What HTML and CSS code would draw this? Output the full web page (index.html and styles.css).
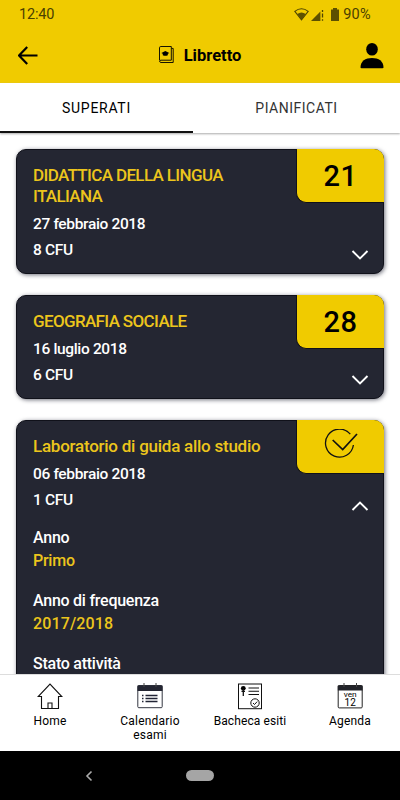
FILE: index.html
```html
<!DOCTYPE html>
<html lang="it">
<head>
<meta charset="utf-8">
<title>Libretto</title>
<link rel="stylesheet" href="styles.css">
</head>
<body>
<div class="app">
  <div class="status">
    <span class="clock">12:40</span>
    <svg class="wifi" width="15" height="13" viewBox="0 0 15 13"><path d="M.8 3.4Q7.5-1.8 14.2 3.4L7.5 11.8Z" fill="none" stroke="#4f4500" stroke-width="1.1"/><path d="M3.2 6Q7.5 3 11.8 6L7.5 11.8Z" fill="#5c5000"/></svg>
    <svg class="signal" width="13" height="12" viewBox="0 0 13 12"><path d="M0 12L9.4 2.6V12Z" fill="#5c5000"/><path d="M11.5 1v2M11.5 4.5v4M11.5 10.2v1.5" stroke="#4f4500" stroke-width="1.3"/></svg>
    <svg class="battery" width="8" height="13" viewBox="0 0 8 13"><path d="M0 1.5h2V0h4v1.5h2V13H0Z" fill="#5c5000"/></svg>
    <span class="percent">90%</span>
  </div>
  <header class="header">
    <svg class="back" width="20" height="19" viewBox="0 0 20 19"><path d="M9.2 1L1 9.5L9.2 18M1 9.5H19.5" fill="none" stroke="#000" stroke-width="2.2"/></svg>
    <div class="heading">
      <svg width="15" height="17" viewBox="0 0 15 17"><path d="M.5 14.2V1.8Q.5.5 1.8.5H12.3V14.2H2Q.5 14.2.5 15.2T2 16.5H14.2V2.4H12.4" fill="none" stroke="#171400"/><path d="M2.4 7L6.3 4.9L10.3 7L6.3 9.2Z"/><path d="M3.8 7.5V9.2Q6.3 10.3 8.8 9.2V7.5Z"/></svg>
      <h1>Libretto</h1>
    </div>
    <svg class="user" width="24" height="26" viewBox="0 0 24 26"><ellipse cx="12" cy="6.3" rx="5.8" ry="6.3"/><path d="M.5 24.5C.5 18 5.4 15 12 15S23.5 18 23.5 24.5Q23.5 25.3 22.5 25.3H1.5Q.5 25.3.5 24.5Z"/></svg>
  </header>
  <nav class="tabs">
    <div class="tab active">SUPERATI</div>
    <div class="tab">PIANIFICATI</div>
  </nav>
  <main class="list">
    <section class="card">
      <h2 class="caps">DIDATTICA DELLA LINGUA ITALIANA</h2>
      <p>27 febbraio 2018</p>
      <p>8 CFU</p>
      <div class="badge">21</div>
      <svg class="chevron" width="18" height="10" viewBox="0 0 18 10"><path d="M1.5 1L9 8.5L16.5 1"/></svg>
    </section>
    <section class="card">
      <h2 class="caps">GEOGRAFIA SOCIALE</h2>
      <p>16 luglio 2018</p>
      <p>6 CFU</p>
      <div class="badge">28</div>
      <svg class="chevron" width="18" height="10" viewBox="0 0 18 10"><path d="M1.5 1L9 8.5L16.5 1"/></svg>
    </section>
    <section class="card open">
      <h2>Laboratorio di guida allo studio</h2>
      <p>06 febbraio 2018</p>
      <p>1 CFU</p>
      <dl class="details">
        <dt>Anno</dt><dd>Primo</dd>
        <dt>Anno di frequenza</dt><dd class="year">2017/2018</dd>
        <dt>Stato attività</dt>
      </dl>
      <div class="badge"><svg width="34" height="30" viewBox="0 0 34 30"><path d="M26.3 5.2A14 14 0 1 0 29.4 16" fill="none" stroke="#111" stroke-width="1.3"/><path d="M8.7 11L18.7 20.5L33 5" fill="none" stroke="#111" stroke-width="1.7"/></svg></div>
      <svg class="chevron" width="18" height="10" viewBox="0 0 18 10"><path d="M1.5 9L9 1.5L16.5 9"/></svg>
    </section>
  </main>
  <nav class="bottom">
    <div class="item">
      <svg width="26" height="27" viewBox="0 0 26 27"><path d="M4.5 13.5H1.2L13 1L24.8 13.5H21.5V25.5H4.5ZM11 25.5V20H15V25.5" fill="none" stroke="#111" stroke-width="1.1"/></svg>
      <span>Home</span>
    </div>
    <div class="item">
      <svg width="26" height="27" viewBox="0 0 26 27"><rect x=".8" y="2.5" width="24.4" height="22.2" rx="1" fill="#fff" stroke="#333640"/><path d="M.5 2.5H25.5V8H.5Z" fill="#242632"/><path d="M7 0V4M19 0V4" stroke="#444"/><path d="M8.5 12.5H20.5M8.5 15.5H20.5M8.5 18.5H20.5" stroke="#222536" stroke-width="1.3"/><path d="M5 12.5H6.5M5 15.5H6.5M5 18.5H6.5" stroke="#222536" stroke-width="1.3"/></svg>
      <span>Calendario<br>esami</span>
    </div>
    <div class="item">
      <svg width="26" height="27" viewBox="0 0 26 27"><rect x="1.5" y="1" width="23" height="24.7" fill="none" stroke="#111"/><circle cx="6.3" cy="5.3" r="2.4"/><path d="M6.3 6V13M4.5 8.4H8" stroke="#111" stroke-width="1.3"/><path d="M11.5 5H22M11.5 8.2H22M11.5 11.5H22" stroke="#111" stroke-width="1.1"/><circle cx="18" cy="20" r="4.2" fill="none" stroke="#111"/><path d="M16 20L17.5 21.5L20.2 18.6" fill="none" stroke="#111"/></svg>
      <span class="tight">Bacheca esiti</span>
    </div>
    <div class="item">
      <svg width="26" height="27" viewBox="0 0 26 27"><rect x="1.2" y="2.5" width="24" height="22.4" rx="1" fill="#fff" stroke="#222"/><path d="M.8 2.5H25.6V7.5H.8Z" fill="#222329"/><path d="M7 0V4M19.5 0V4" stroke="#444"/><text class="day" x="13.2" y="13.8" textLength="13" lengthAdjust="spacingAndGlyphs">ven</text><text class="num" x="13.2" y="23.4">12</text></svg>
      <span>Agenda</span>
    </div>
  </nav>
  <div class="system">
    <svg width="8" height="12" viewBox="0 0 8 12"><path d="M6.5 1.5L2 6L6.5 10.5" fill="none" stroke="#aaa" stroke-width="1.6"/></svg>
    <div class="pill"></div>
    <div></div>
  </div>
</div>
</body>
</html>
```
FILE: styles.css
```css
* { box-sizing: border-box; margin: 0; padding: 0; }
body { background: #fff; font-family: Roboto, "Liberation Sans", sans-serif; color: #111; }
svg { display: block; flex: none; }
.app { width: 400px; height: 800px; display: flex; flex-direction: column; overflow: hidden; }
.status { height: 28px; flex: none; background: #f0cb00; display: flex; align-items: center; padding: 1px 29px 0 19px; color: #4a4000; font-size: 14.5px; }
.clock { margin-right: auto; letter-spacing: -.2px; }
.signal { margin-left: 2px; }
.battery { margin: 0 4px 0 7px; }
.percent { letter-spacing: .3px; }
.header { height: 55px; flex: none; background: #f0cb00; display: flex; align-items: center; justify-content: space-between; padding: 0 16px 0 18px; }
.heading { display: flex; align-items: center; gap: 10px; padding-left: 2px; }
.heading svg { margin-top: -3px; }
h1 { font-size: 16.5px; font-weight: 700; line-height: 20px; color: #000; padding-top: 1px; }
.tabs { height: 50px; flex: none; display: flex; background: #fff; box-shadow: 0 1px 2px #aaa; }
.tab { width: 193px; display: flex; align-items: center; justify-content: center; font-size: 14px; letter-spacing: .5px; color: #333; }
.tab + .tab { width: 207px; }
.active { color: #000; border-bottom: 2px solid #111; padding-top: 2px; letter-spacing: .7px; }
.list { flex: 1; min-height: 0; overflow: hidden; display: flex; flex-direction: column; gap: 21px; padding: 16px 16px 0; }
.card { position: relative; flex: none; background: #242632; border: 1px solid #10111a; border-radius: 10px; padding: 15px 16px 10px; box-shadow: 1px 1px 4px rgba(20,22,40,.6); color: #fff; }
.open { height: 300px; }
h2 { width: 235px; font-size: 17px; font-weight: 500; line-height: 21px; color: #ecc51c; margin-bottom: 4px; white-space: nowrap; letter-spacing: -.25px; }
.caps { width: 210px; white-space: normal; letter-spacing: -.64px; }
p { font-size: 15.5px; font-weight: 500; line-height: 26px; letter-spacing: -.35px; }
.badge { position: absolute; top: -1px; right: -1px; width: 88px; height: 54px; background: #f0cb00; border: 1px solid #10111a; border-width: 0 0 1px 1px; border-radius: 0 10px 0 10px; display: flex; align-items: center; justify-content: center; font-size: 29px; font-weight: 500; letter-spacing: .5px; color: #000; }
.badge svg { margin-top: -5px; }
.chevron { position: absolute; right: 14px; bottom: 13px; fill: none; stroke: #fff; stroke-width: 1.9; }
.open .chevron { top: 80px; bottom: auto; }
.details { padding-top: 13px; font-size: 16px; font-weight: 500; line-height: 23px; letter-spacing: -.25px; }
dd { color: #ecc51c; margin-bottom: 17px; }
.year { letter-spacing: .15px; }
.bottom { height: 77px; flex: none; display: grid; grid-template-columns: repeat(4, 100px); background: #fff; border-top: 1px solid #ddd; position: relative; }
.item { display: flex; flex-direction: column; align-items: center; padding-top: 8px; text-align: center; font-size: 12px; line-height: 14px; letter-spacing: .2px; color: #000; }
.item span { margin-top: 4px; }
.item .tight { letter-spacing: .1px; }
.day { font-size: 8px; letter-spacing: 0; text-anchor: middle; }
.num { font-size: 10px; letter-spacing: 0; text-anchor: middle; }
.system { height: 49px; flex: none; background: #000; display: grid; grid-template-columns: 1fr 28px 1fr; align-items: center; }
.system svg { margin-left: 85px; }
.pill { height: 11px; background: #a5a5a5; border-radius: 6px; }
```
